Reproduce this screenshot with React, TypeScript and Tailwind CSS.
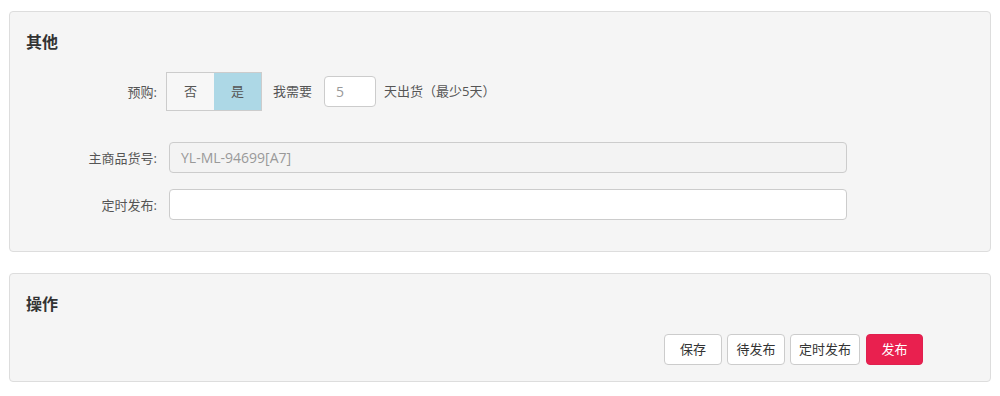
import React from "react";

const font = { fontFamily: '"Open Sans", "Noto Sans CJK SC", sans-serif' };

function Label({ children }: { children: React.ReactNode }) {
  return (
    <div className="w-[131px] shrink-0 text-right text-[13px] text-[#555] leading-[20px]">
      {children}
    </div>
  );
}

export default function App() {
  return (
    <div className="w-[1000px] h-[396px] bg-white px-[9px] pt-[11px]" style={font}>
      <div className="h-[241px] rounded-[4px] border border-[#dddddd] bg-[#f5f5f5] pl-4 pt-[18px]">
        <div className="text-[16px] font-bold leading-[24px] text-[#333]">其他</div>
        <div className="mt-[18px] flex items-center h-[39px]">
          <Label>预购:</Label>
          <div className="ml-[9px] flex h-[39px] border border-[#cccccc]">
            <div className="flex w-[47px] items-center justify-center bg-[#f7f7f7] text-[13px] text-[#555]">否</div>
            <div className="flex w-[47px] items-center justify-center bg-[#add8e6] text-[13px] text-[#555]">是</div>
          </div>
          <span className="ml-[11px] text-[13px] text-[#555]">我需要</span>
          <div className="ml-[12px] flex h-[31px] w-[52px] items-center rounded-[4px] border border-[#cccccc] bg-white pl-[11px] text-[14px] text-[#999]">
            5
          </div>
          <span className="ml-[8px] text-[13px] text-[#555]">天出货（最少5天）</span>
        </div>
        <div className="mt-[31px] flex items-center">
          <Label>主商品货号:</Label>
          <div className="ml-[12px] flex h-[31px] w-[678px] items-center rounded-[4px] border border-[#cccccc] bg-[#f3f3f3] pl-[11px] text-[14px] text-[#999]">
            YL-ML-94699[A7]
          </div>
        </div>
        <div className="mt-[16px] flex items-center">
          <Label>定时发布:</Label>
          <div className="ml-[12px] h-[31px] w-[678px] rounded-[4px] border border-[#cccccc] bg-white" />
        </div>
      </div>
      <div className="mt-[21px] h-[109px] rounded-[4px] border border-[#dddddd] bg-[#f5f5f5] pl-4 pt-[18px]">
        <div className="text-[16px] font-bold leading-[24px] text-[#333]">操作</div>
        <div className="mt-[18px] flex gap-[5px] pl-[638px]">
          <button className="h-[31px] w-[58px] rounded-[4px] border border-[#cccccc] bg-white text-[13px] text-[#333]">保存</button>
          <button className="h-[31px] w-[58px] rounded-[4px] border border-[#cccccc] bg-white text-[13px] text-[#333]">待发布</button>
          <button className="h-[31px] w-[70px] rounded-[4px] border border-[#cccccc] bg-white text-[13px] text-[#333]">定时发布</button>
          <button className="ml-[1px] h-[31px] w-[57px] rounded-[4px] border border-[#e0204f] bg-[#e9204f] text-[13px] text-white">发布</button>
        </div>
      </div>
    </div>
  );
}
